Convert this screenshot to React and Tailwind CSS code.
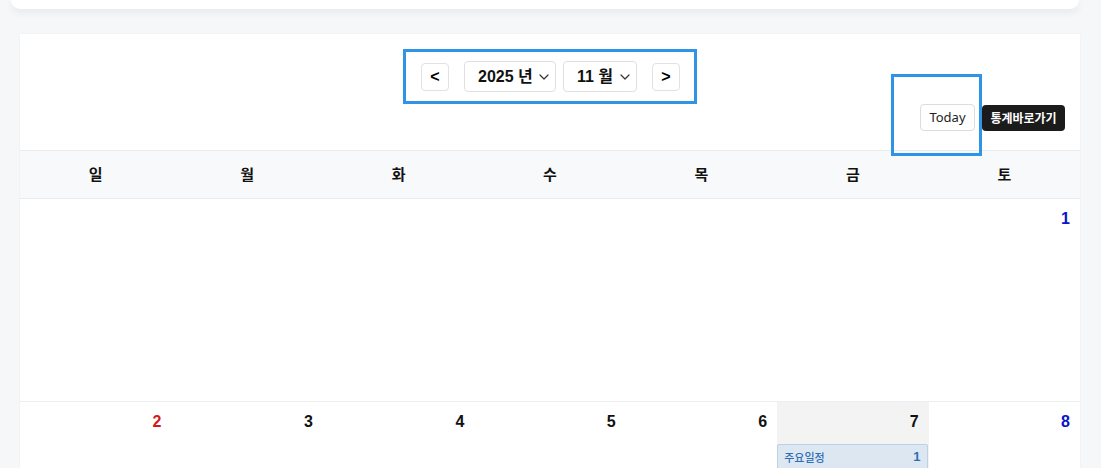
import React from 'react'

const Chevron = () => (
    <svg width="10" height="6" viewBox="0 0 10 6" fill="none" className="ml-auto">
        <path d="M1 1l4 4 4-4" stroke="#333" strokeWidth="1.2" strokeLinecap="round" strokeLinejoin="round" />
    </svg>
)

const App = () => {
    const days = ['일', '월', '화', '수', '목', '금', '토']

    const row1 = [null, null, null, null, null, null, 1]
    const row2 = [2, 3, 4, 5, 6, 7, 8]

    const dayColor = (i) => {
        if (i === 0) return 'text-[#d11a1a]'
        if (i === 6) return 'text-[#0a14c8]'
        return 'text-[#111]'
    }

    return (
        <div className="w-[1101px] h-[468px] overflow-hidden bg-[#f6f7f9] font-['Liberation_Sans','Noto_Sans_CJK_KR',sans-serif]">
            {/* top card (scrolled) */}
            <div className="ml-[11px] mr-[22px] h-[9px] bg-white rounded-b-[12px] shadow-[0_3px_8px_rgba(0,0,0,0.07)]"></div>

            {/* calendar card */}
            <div className="mt-[25px] ml-[20px] mr-[21px] bg-white shadow-[0_0_2px_rgba(0,0,0,0.05)]">
                {/* toolbar */}
                <div className="relative h-[116px] pt-[15px]">
                    <div className="mx-auto w-[294px] h-[55px] border-[3px] border-[#2f94e5] flex items-center pl-[15px]">
                        <button className="w-[28px] h-[28px] border border-[#e2e2e2] rounded-[4px] text-[16px] font-bold text-black flex items-center justify-center">&lt;</button>
                        <div className="ml-[15px] w-[92px] h-[31px] border border-[#e0e0e0] rounded-[4px] flex items-center pl-[13px] pr-[6px] text-[16px] font-bold text-[#111]">
                            <span>2025 년</span>
                            <Chevron />
                        </div>
                        <div className="ml-[7px] w-[74px] h-[31px] border border-[#e0e0e0] rounded-[4px] flex items-center pl-[13px] pr-[6px] text-[16px] font-bold text-[#111]">
                            <span>11 월</span>
                            <Chevron />
                        </div>
                        <button className="ml-[15px] w-[28px] h-[28px] border border-[#e2e2e2] rounded-[4px] text-[16px] font-bold text-black flex items-center justify-center">&gt;</button>
                    </div>

                    <div className="absolute right-[15px] top-[70px] flex items-center gap-[7px]">
                        <button className="w-[55px] h-[27px] border border-[#dcdcdc] rounded-[4px] bg-white text-[13px] text-[#222] font-['Noto_Sans','Noto_Sans_CJK_KR',sans-serif]">Today</button>
                        <button className="w-[83px] h-[26px] rounded-[4px] bg-[#1b1b1b] text-white text-[12px] font-bold font-['Noto_Sans_CJK_KR',sans-serif]">통계바로가기</button>
                    </div>

                    {/* highlight frame */}
                    <div className="absolute left-[871px] top-[40px] w-[91px] h-[82px] border-[3px] border-[#2f94e5] z-10 pointer-events-none"></div>
                </div>

                {/* weekday header */}
                <div className="grid grid-cols-7 h-[49px] bg-[#f8f9fa] border-t border-b border-[#e9ecef]">
                    {days.map((d) => (
                        <div key={d} className="flex items-center justify-center text-[15px] font-bold text-[#111] font-['Noto_Sans_CJK_KR',sans-serif]">{d}</div>
                    ))}
                </div>

                {/* week 1 */}
                <div className="grid grid-cols-7 h-[203px] border-b border-[#eceef0]">
                    {row1.map((n, i) => (
                        <div key={i} className="pt-[8px] pr-[10px] text-right">
                            {n && <span className={`text-[16px] font-bold ${dayColor(i)}`}>{n}</span>}
                        </div>
                    ))}
                </div>

                {/* week 2 */}
                <div className="grid grid-cols-7 h-[80px]">
                    {row2.map((n, i) => (
                        <div key={i} className={`pt-[8px] text-right ${n === 7 ? 'bg-[#f3f3f3]' : ''}`}>
                            <div className={`pr-[10px] text-[16px] font-bold ${dayColor(i)}`}>{n}</div>
                            {n === 7 && (
                                <div className="mt-[10px] mr-[1px] h-[26px] bg-[#dde7f2] border border-[#bdd0e4] rounded-[2px] flex items-center justify-between px-[6px] text-[#2d6fb5]">
                                    <span className="text-[11px] font-medium font-['Noto_Sans_CJK_KR',sans-serif]">주요일정</span>
                                    <span className="text-[13px] font-bold">1</span>
                                </div>
                            )}
                        </div>
                    ))}
                </div>
            </div>
        </div>
    )
}

export default App
